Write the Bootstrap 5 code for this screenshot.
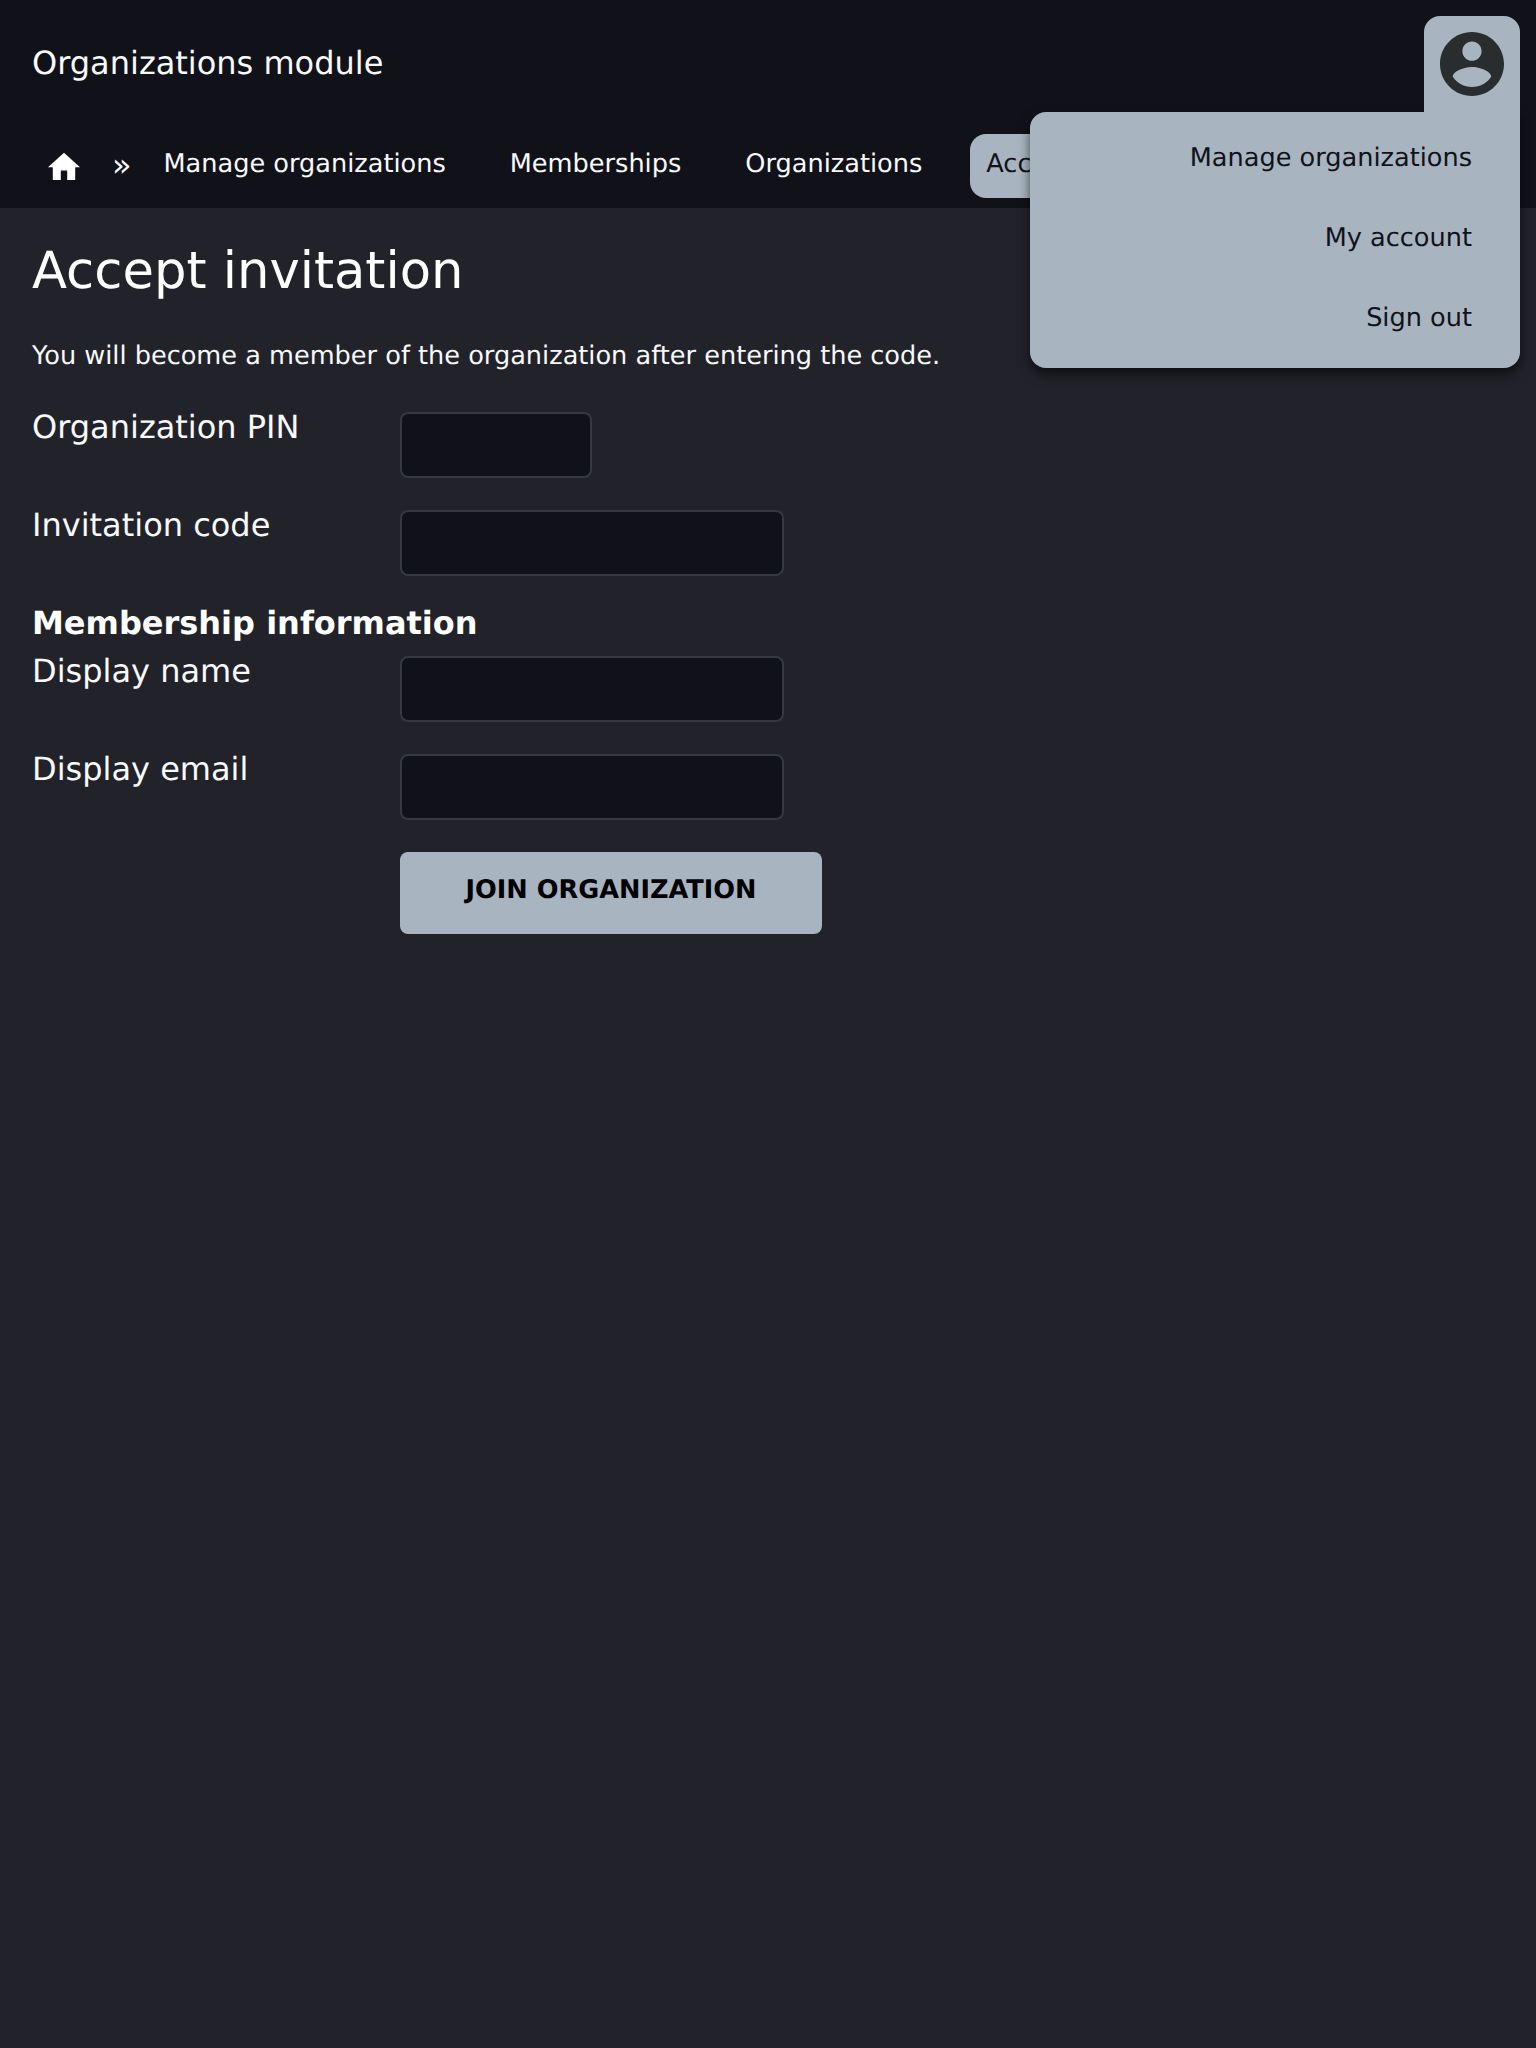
<!DOCTYPE html>
<html lang="en" data-bs-theme="dark">
<head>
<meta charset="utf-8">
<meta name="viewport" content="width=device-width, initial-scale=1">
<title>Accept invitation</title>
<link href="https://cdn.jsdelivr.net/npm/bootstrap@5.3.0/dist/css/bootstrap.min.css" rel="stylesheet">
<style>
  :root { --ink: #111119; --steel: #a8b5c0; --paper: #f8f9fa; }
  body { background: #22222a; color: var(--paper); font-family: "DejaVu Sans", sans-serif; font-size: 25.6px; line-height: 32px; text-rendering: geometricPrecision; }
  .top-bar { height: 208px; background: var(--ink); }
  .module-title { font-size: 32px; height: 126px; line-height: 126px; padding-left: 32px; }
  .crumbs { margin: 8px 0 0 48px; height: 64px; }
  .crumbs .nav { gap: 32px; }
  .crumbs .nav-link { color: var(--paper); padding: 0 16px; height: 64px; line-height: 60px; border-radius: 16px; white-space: nowrap; }
  .crumbs .nav-link.active { background: var(--steel); color: var(--ink); }
  .home-icon { width: 32px; height: 28.8px; margin-top: 18px; }
  .crumb-sep { font-size: 32px; line-height: 62px; margin: 0 15.5px 0 32px; width: 20px; }
  .account { position: absolute; top: 16px; right: 16px; z-index: 10; }
  .account-tab { position: relative; z-index: 1; width: 96px; height: 96px; padding: 16px; background: var(--steel); border: 0; border-radius: 16px 16px 0 0; color: #292d2f; }
  .account-menu { position: absolute; top: 96px; right: 0; width: 490px; height: 256px; background: var(--steel); border-radius: 16px 0 16px 16px; box-shadow: 0 6px 12px rgba(0,0,0,.6); padding: 6px 0 0; }
  .account-menu a { display: block; height: 80px; line-height: 80px; padding-right: 48px; text-align: right; color: var(--ink); text-decoration: none; }
  main { padding: 33px 32px 0; }
  h1 { font-size: 51.2px; line-height: 60px; margin: 0; font-weight: 400; }
  .intro { margin: 39px 0 40px; }
  .field-row { margin-bottom: 32px; }
  .field-label { width: 368px; font-size: 32px; line-height: 30px; }
  .form-control, .form-control:focus { width: 384px; height: 66px; background: var(--ink); border: 2px solid #343a40; border-radius: 8px; box-shadow: none; }
  .form-control.pin { width: 192px; }
  .group-title { font-size: 32px; line-height: 30px; height: 48px; margin: 0; font-weight: 700; }
  .join { margin-left: 368px; width: 422px; height: 82px; padding: 0 0 6px; background: var(--steel); border: 0; border-radius: 8px; color: #000; font-size: 25.6px; font-weight: 700; text-rendering: inherit; }
</style>
</head>
<body>
<header class="top-bar">
  <div class="module-title">Organizations module</div>
  <nav class="crumbs d-flex">
    <a href="#" aria-label="Home" class="flex-shrink-0 d-flex align-items-start"><svg class="home-icon" viewBox="2 2.5 20 18" fill="#fff"><path d="M10 20v-6h4v6h5v-8h3L12 3 2 12h3v8z"/></svg></a>
    <span class="crumb-sep">»</span>
    <div class="nav flex-nowrap">
      <a class="nav-link" href="#">Manage organizations</a>
      <a class="nav-link" href="#">Memberships</a>
      <a class="nav-link" href="#">Organizations</a>
      <a class="nav-link active" href="#">Accept invitation</a>
    </div>
  </nav>
</header>
<div class="account">
  <button class="account-tab d-block" aria-label="Account"><svg class="d-block" width="64" height="64" viewBox="2 2 20 20" fill="currentColor"><path d="M12 2C6.48 2 2 6.48 2 12s4.48 10 10 10 10-4.48 10-10S17.52 2 12 2zm0 3c1.66 0 3 1.34 3 3s-1.34 3-3 3-3-1.34-3-3 1.34-3 3-3zm0 14.2c-2.5 0-4.71-1.28-6-3.22.03-1.99 4-3.08 6-3.08 1.99 0 5.97 1.09 6 3.08-1.29 1.94-3.5 3.22-6 3.22z"/></svg></button>
  <div class="account-menu">
    <a href="#">Manage organizations</a>
    <a href="#">My account</a>
    <a href="#">Sign out</a>
  </div>
</div>
<main>
  <h1>Accept invitation</h1>
  <p class="intro">You will become a member of the organization after entering the code.</p>
  <form>
    <div class="field-row d-flex"><label class="field-label" for="pin">Organization PIN</label><input class="form-control pin" id="pin"></div>
    <div class="field-row d-flex"><label class="field-label" for="code">Invitation code</label><input class="form-control" id="code"></div>
    <h2 class="group-title">Membership information</h2>
    <div class="field-row d-flex"><label class="field-label" for="name">Display name</label><input class="form-control" id="name"></div>
    <div class="field-row d-flex"><label class="field-label" for="email">Display email</label><input class="form-control" id="email"></div>
    <button class="btn join" type="button">JOIN ORGANIZATION</button>
  </form>
</main>
<script src="https://cdn.jsdelivr.net/npm/bootstrap@5.3.0/dist/js/bootstrap.bundle.min.js"></script>
</body>
</html>
